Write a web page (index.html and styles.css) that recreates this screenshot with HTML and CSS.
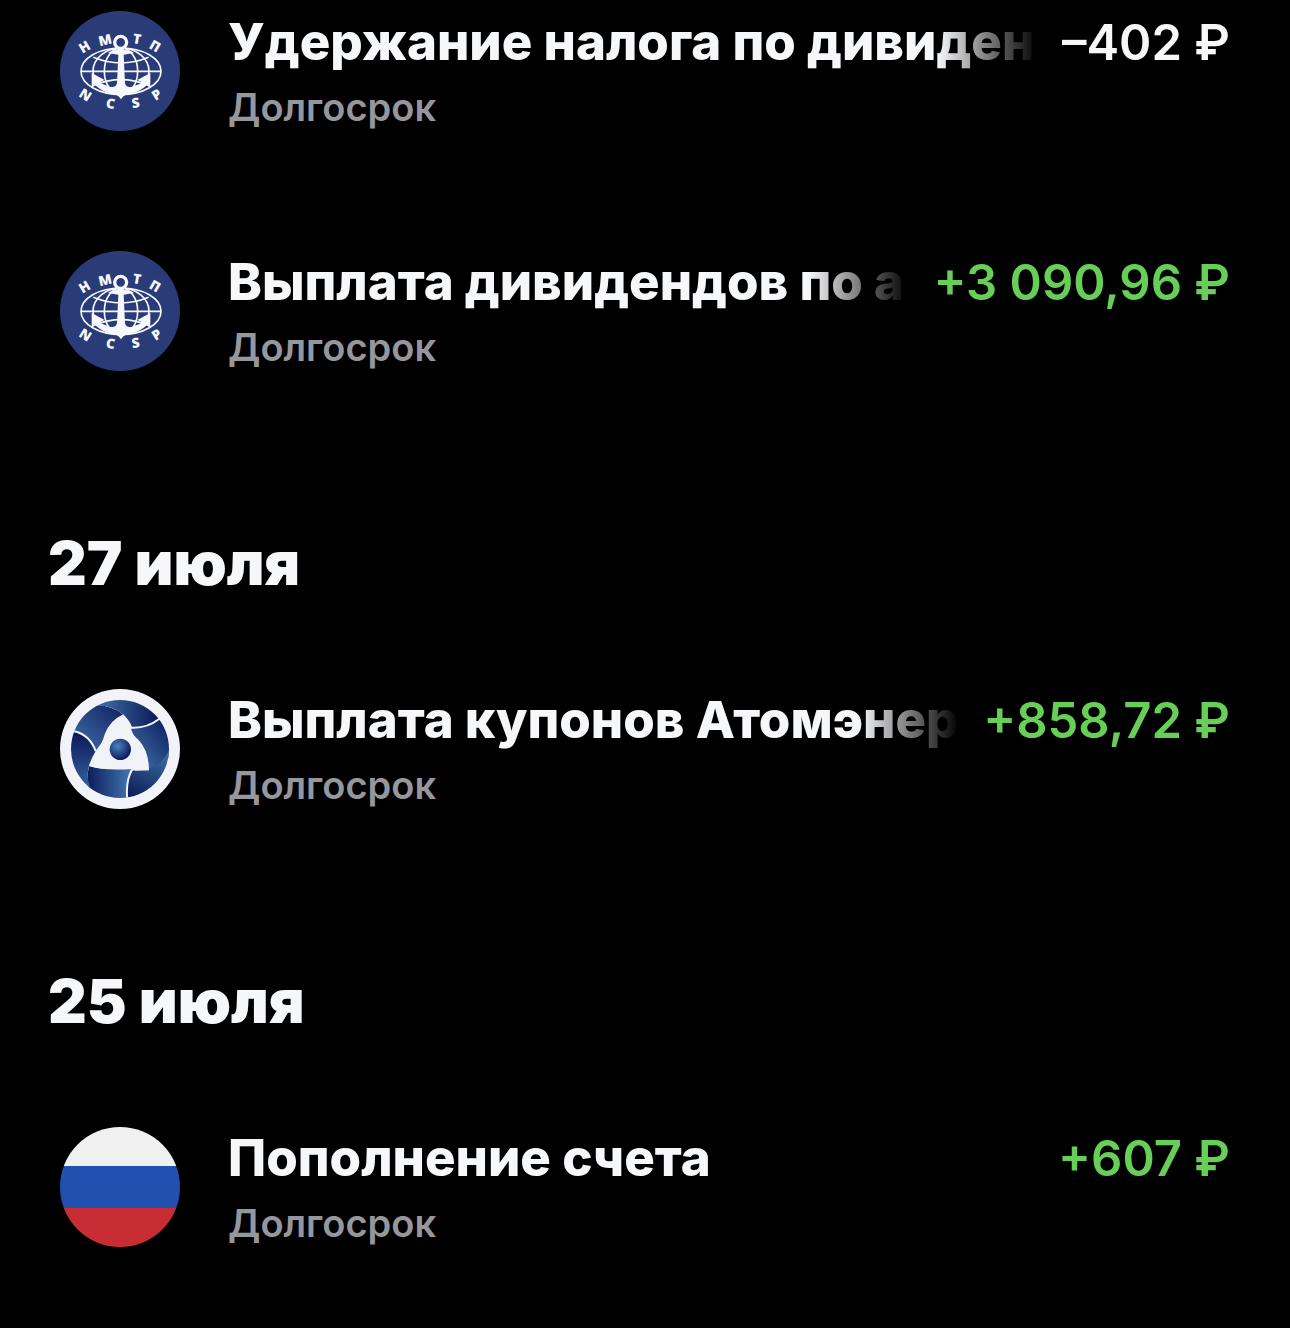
FILE: index.html
```html
<!DOCTYPE html>
<html lang="ru">
<head>
<meta charset="utf-8">
<meta name="viewport" content="width=device-width, initial-scale=1">
<title>Операции</title>
<link rel="stylesheet" href="styles.css">
</head>
<body>
<svg class="defs" aria-hidden="true">
  <defs>
    <symbol id="ncsp" viewBox="30 33 360 360">
      <circle cx="210" cy="213" r="180" fill="#293c77"/>
      <g fill="none" stroke="#f6f8fc" stroke-width="5">
        <ellipse cx="213" cy="214" rx="120" ry="70"/>
        <ellipse cx="213" cy="214" rx="84" ry="70"/>
        <ellipse cx="213" cy="214" rx="50" ry="70"/>
        <path d="M93 214H333M130 172Q213 206 296 172M130 256Q213 222 296 256"/>
      </g>
      <circle cx="212" cy="127" r="18" fill="#293c77" stroke="#f6f8fc" stroke-width="10"/>
      <path fill="#f6f8fc" d="M204 144H220L222 150Q240 148 252 159L221 164L225 250Q228 264 246 260Q268 254 277 247L262 240L301 219V264L290 256Q270 276 242 279Q224 281 213 298Q202 281 184 279Q156 276 136 256L125 264V219L164 240L149 247Q158 254 180 260Q198 264 201 250L205 164L174 159Q186 148 202 150Z"/>
      <g class="logo-letters">
        <text transform="translate(104 141) rotate(-31)" y="14">Н</text>
        <text transform="translate(165 121) rotate(-13)" y="14">М</text>
        <text transform="translate(261 117) rotate(10)" y="14">Т</text>
        <text transform="translate(315 139) rotate(30)" y="14">П</text>
        <text transform="translate(106 285) rotate(32)" y="14">N</text>
        <text transform="translate(182 311) rotate(8)" y="14">C</text>
        <text transform="translate(257 309) rotate(-9)" y="14">S</text>
        <text transform="translate(320 284) rotate(-32)" y="14">P</text>
      </g>
    </symbol>
    <linearGradient id="blade-a" x1="0" y1="1" x2="1" y2="0"><stop offset="0" stop-color="#4377ae"/><stop offset="1" stop-color="#0e1a5c"/></linearGradient>
    <linearGradient id="blade-b" x1="0" y1="0" x2="1" y2="0"><stop offset="0" stop-color="#3f72a8"/><stop offset="1" stop-color="#08124f"/></linearGradient>
    <linearGradient id="blade-c" x1="0" y1="1" x2="1" y2="0"><stop offset="0" stop-color="#4377ae"/><stop offset="1" stop-color="#0a1858"/></linearGradient>
    <linearGradient id="blade-d" x1="0" y1="0" x2="1" y2="0"><stop offset="0" stop-color="#0c1c5c"/><stop offset="1" stop-color="#4379b2"/></linearGradient>
    <linearGradient id="blade-e" x1="0" y1="0" x2="0" y2="1"><stop offset="0" stop-color="#0a1557"/><stop offset="1" stop-color="#3a6ba5"/></linearGradient>
    <radialGradient id="core" cx=".38" cy=".35" r=".65"><stop offset="0" stop-color="#4a83bd"/><stop offset="1" stop-color="#0c1b5c"/></radialGradient>
    <clipPath id="disc"><circle cx="210" cy="207" r="147"/></clipPath>
    <clipPath id="flag-disc"><circle cx="210" cy="210" r="180"/></clipPath>
    <symbol id="rosatom" viewBox="30 27 360 360">
      <circle cx="210" cy="207" r="180" fill="#f2f3f9"/>
      <g clip-path="url(#disc)">
        <path fill="url(#blade-a)" d="M50 160L75 154Q115 163 137 212L220 104Q190 78 140 76L60 60Z"/>
        <path fill="url(#blade-b)" d="M140 77Q190 76 220 104Q240 122 246 142Q290 143 324 119L340 40H140Z"/>
        <path fill="url(#blade-c)" d="M244 143Q290 145 325 119L370 130V210Q345 265 296 271L244 150Z"/>
        <path fill="url(#blade-b)" transform="rotate(120 210 207)" d="M140 77Q190 76 220 104Q240 122 246 142Q290 143 324 119L340 40H140Z"/>
        <path fill="url(#blade-d)" d="M117 258Q160 273 246 267Q227 305 232 356L130 360Q104 315 117 258Z"/>
        <path fill="url(#blade-e)" d="M74 155Q117 165 137 212L117 258Q105 296 130 345H50V150Z"/>
        <path fill="none" stroke="#f2f3f9" stroke-width="6" d="M243 143Q290 146 326 118M73 154Q118 164 137 213M247 266Q226 304 232 357"/>
      </g>
      <path fill="#f2f3f9" d="M220 103Q235 120 242 150Q248 165 266 180Q297 214 297 271Q274 273 253 267Q230 258 202 262Q158 271 117 258Q123 234 139 213Q156 194 164 163Q179 122 220 103Z"/>
      <circle cx="211" cy="208" r="32" fill="url(#core)"/>
    </symbol>
    <symbol id="flag" viewBox="30 30 360 360">
      <g clip-path="url(#flag-disc)">
        <path fill="#f0f0f0" d="M30 30H390V147H30Z"/>
        <path fill="#2151b0" d="M30 147H390V273H30Z"/>
        <path fill="#c72d32" d="M30 273H390V390H30Z"/>
      </g>
    </symbol>
  </defs>
</svg>
<main class="feed">
  <ul class="list">
    <li class="row">
      <svg class="logo" role="img" aria-label="НМТП"><use href="#ncsp"/></svg>
      <div class="info">
        <div class="line"><span class="title title-fade">Удержание налога по дивиден</span><span class="amount">–402 ₽</span></div>
        <span class="account">Долгосрок</span>
      </div>
    </li>
    <li class="row">
      <svg class="logo" role="img" aria-label="НМТП"><use href="#ncsp"/></svg>
      <div class="info">
        <div class="line"><span class="title title-fade">Выплата дивидендов по а</span><span class="amount income">+3 090,96 ₽</span></div>
        <span class="account">Долгосрок</span>
      </div>
    </li>
  </ul>
  <h2 class="date">27 июля</h2>
  <ul class="list">
    <li class="row">
      <svg class="logo" role="img" aria-label="Росатом"><use href="#rosatom"/></svg>
      <div class="info">
        <div class="line"><span class="title title-fade">Выплата купонов Атомэнер</span><span class="amount income">+858,72 ₽</span></div>
        <span class="account">Долгосрок</span>
      </div>
    </li>
  </ul>
  <h2 class="date">25 июля</h2>
  <ul class="list">
    <li class="row">
      <svg class="logo" role="img" aria-label="Рубли"><use href="#flag"/></svg>
      <div class="info">
        <div class="line"><span class="title">Пополнение счета</span><span class="amount income">+607 ₽</span></div>
        <span class="account">Долгосрок</span>
      </div>
    </li>
  </ul>
</main>
</body>
</html>
```
FILE: styles.css
```css
* {
  box-sizing: border-box;
}

body {
  margin: 0;
  background: #000;
  color: #f6f7f9;
  font-family: Inter, "Liberation Sans", sans-serif;
}

.defs {
  position: absolute;
  width: 0;
  height: 0;
}

.logo-letters {
  fill: #f6f8fc;
  font-family: "Open Sans", sans-serif;
  font-size: 41px;
  font-weight: 800;
  text-anchor: middle;
}

.feed {
  padding: 11px 60px 80px;
}

.list {
  display: flex;
  flex-direction: column;
  gap: 120px;
  margin: 0;
  padding: 0;
  list-style: none;
}

.row {
  display: flex;
  gap: 48px;
}

.logo {
  flex: none;
  width: 120px;
  height: 120px;
}

.info {
  flex: 1;
  min-width: 0;
}

.line {
  display: flex;
  align-items: baseline;
  gap: 24px;
  height: 62px;
  line-height: 62px;
  white-space: nowrap;
}

.title {
  flex: 1;
  min-width: 0;
  overflow: hidden;
  font-size: 51px;
  font-weight: 800;
}

.title-fade {
  -webkit-mask-image: linear-gradient(to left, transparent, #000 100px);
  mask-image: linear-gradient(to left, transparent, #000 100px);
}

.amount {
  font-size: 49px;
  font-weight: 600;
}

.income {
  color: #67ce58;
}

.account {
  display: block;
  margin-top: 10px;
  color: #96969d;
  font-size: 38px;
  font-weight: 600;
  line-height: 48px;
}

.date {
  margin: 162px 0 96px -12px;
  font-size: 60px;
  font-weight: 900;
  line-height: 60px;
}
```
